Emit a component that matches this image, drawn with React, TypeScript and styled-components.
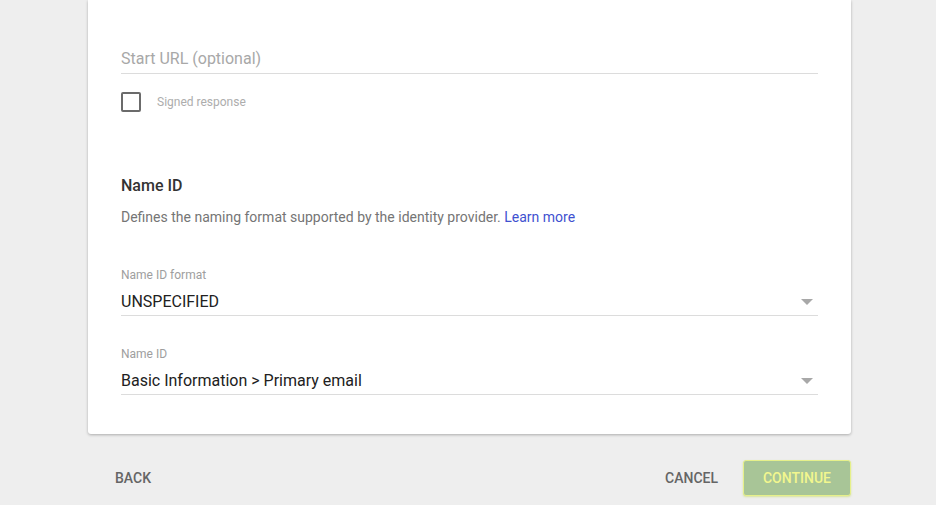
import React from 'react'
import styled, { createGlobalStyle } from 'styled-components'

const Global = createGlobalStyle`
    html, body {
        margin: 0;
        padding: 0;
        background: #eeeeee;
        font-family: Roboto, "Liberation Sans", sans-serif;
    }
`

const Page = styled.div`
    width: 763px;
    margin: 0 auto 0 88px;
`

const Card = styled.div`
    background: #fff;
    border-radius: 0 0 3px 3px;
    box-shadow: 0 1px 3px rgba(0, 0, 0, 0.28);
    padding: 40px 33px 39px 33px;
`

const Field = styled.div`
    display: flex;
    flex-direction: column;
    border-bottom: 1px solid #dcdcdc;
`

const Placeholder = styled.div`
    font-size: 16px;
    line-height: 24px;
    padding: 7px 0 2px 0;
    color: #a8a8a8;
`

const CheckRow = styled.label`
    display: flex;
    align-items: center;
    gap: 16px;
    margin-top: 18px;
`

const Box = styled.span`
    width: 16px;
    height: 16px;
    border: 2px solid #6b6b6b;
    border-radius: 2px;
`

const CheckText = styled.span`
    font-size: 12px;
    color: #adadad;
`

const Section = styled.div`
    margin-top: 64px;
`

const Heading = styled.div`
    font-size: 16px;
    font-weight: 500;
    color: #333;
    line-height: 20px;
`

const Desc = styled.div`
    margin-top: 11px;
    font-size: 14px;
    color: #757575;
    line-height: 20px;
    a {
        color: #3f51d0;
        text-decoration: none;
    }
`

const Select = styled.div<{ $top: number }>`
    margin-top: ${p => p.$top}px;
    border-bottom: 1px solid #dcdcdc;
`

const Label = styled.div`
    font-size: 12px;
    color: #9e9e9e;
    line-height: 14px;
`

const Value = styled.div`
    display: flex;
    align-items: center;
    justify-content: space-between;
    font-size: 16px;
    color: #212121;
    line-height: 20px;
    padding: 10px 0 3px 0;
`

const Arrow = styled.span`
    width: 0;
    height: 0;
    margin-right: 5px;
    border-left: 6px solid transparent;
    border-right: 6px solid transparent;
    border-top: 6px solid #a8a8a8;
`

const Footer = styled.div`
    display: flex;
    align-items: center;
    padding: 26px 0 8px 0;
`

const TextButton = styled.button<{ $right?: number }>`
    background: none;
    border: none;
    font-family: Roboto, "Liberation Sans", sans-serif;
    font-size: 14px;
    font-weight: 500;
    color: #656565;
    padding: 0 ${p => p.$right ?? 27}px 0 27px;
    height: 36px;
    text-transform: uppercase;
`

const Spacer = styled.div`
    flex: 1;
`

const Primary = styled.button`
    background: #a8c597;
    border: 1px solid #e6f08a;
    border-radius: 3px;
    box-shadow: 0 1px 2px rgba(200, 220, 100, 0.6);
    font-family: Roboto, "Liberation Sans", sans-serif;
    font-size: 14px;
    font-weight: 500;
    color: #f2f78e;
    width: 108px;
    height: 36px;
`

const App: React.FC = () => {
    return (
        <Page>
            <Global />
            <Card>
                <Field>
                    <Placeholder>Start URL (optional)</Placeholder>
                </Field>
                <CheckRow>
                    <Box />
                    <CheckText>Signed response</CheckText>
                </CheckRow>
                <Section>
                    <Heading>Name ID</Heading>
                    <Desc>
                        Defines the naming format supported by the identity provider. <a href="#">Learn more</a>
                    </Desc>
                    <Select $top={41}>
                        <Label>Name ID format</Label>
                        <Value>
                            UNSPECIFIED
                            <Arrow />
                        </Value>
                    </Select>
                    <Select $top={31}>
                        <Label>Name ID</Label>
                        <Value>
                            Basic Information &gt; Primary email
                            <Arrow />
                        </Value>
                    </Select>
                </Section>
            </Card>
            <Footer>
                <TextButton>Back</TextButton>
                <Spacer />
                <TextButton $right={25}>Cancel</TextButton>
                <Primary>CONTINUE</Primary>
            </Footer>
        </Page>
    )
}

export default App
